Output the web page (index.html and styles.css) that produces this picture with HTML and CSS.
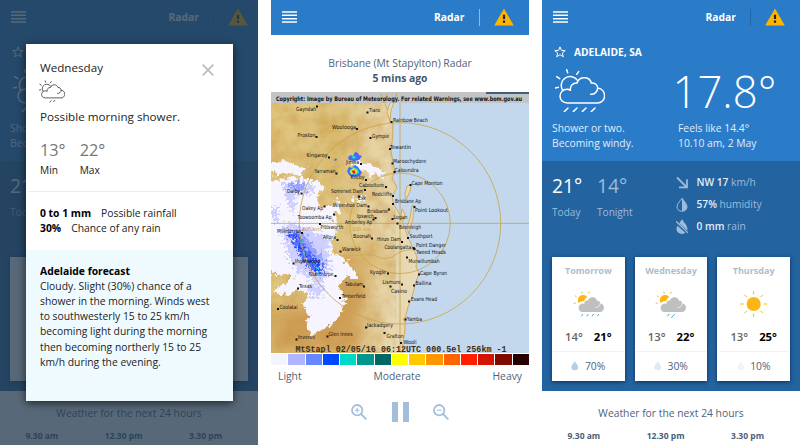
FILE: index.html
```html
<!DOCTYPE html>
<html lang="en">
<head>
<meta charset="utf-8">
<title>Weather</title>
<link rel="stylesheet" href="styles.css">
</head>
<body>
<svg class="defs" aria-hidden="true">
  <symbol id="menu" viewBox="0 0 15 12"><path d="M0 1h15M0 4.3h15M0 7.7h15M0 11h15" stroke="currentColor" stroke-width="1.5"/></symbol>
  <symbol id="alert" viewBox="0 0 20 18"><path d="M10 .4 19.8 17.6H.2z" fill="#ffb400"/><path d="M8.9 6.8h2.2v4.2H8.9zM8.9 12.6h2.2v2.2H8.9z" fill="#222"/></symbol>
  <symbol id="star" viewBox="0 0 12 12"><path d="M6 .9 7.4 4.4 11.2 4.6 8.3 7 9.3 10.8 6 8.7 2.7 10.8 3.7 7 .8 4.6 4.6 4.4z" fill="none" stroke="currentColor" stroke-width="1"/></symbol>
  <symbol id="cloud-line" viewBox="45 205 150 130">
    <g fill="none" stroke="currentColor" stroke-linecap="round">
      <path d="M152 281C162 282 173 275 173 262 186 264 194 274 194 286 194 298 184 307 172 307H82C69 307 60 298 60 287 60 275 69 266 81 266 85 266 88 267 91 269M91 267C90 255 99 246 111 247 114 237 123 231 133 231 144 231 152 238 154 247 165 246 173 253 173 262"/>
      <path d="M68 269A25 25 0 1 1 113 240M80 207l3 9M116 213l-6 8M50 228l9 6M46 262l9-2"/>
    </g>
  </symbol>
  <symbol id="cloud-fill" viewBox="100 116 94 84">
    <path d="M117 155a15 15 0 1 1 26-17c-6 3-8 6-9 11-6-1-12 1-17 6z" fill="#fdb515"/>
    <path d="M126 121l2 6M150 121l-4 6M106 133l5 4M102 157l6-2" stroke="#fdb515" stroke-width="3"/>
    <path d="M127 182a13 13 0 0 1-1-25q4-1 8 1c-1-8 5-11 10-10 3-7 9-11 15-10 7 0 12 4 13 10 7-1 10 4 9 8 8 1 12 6 12 13s-5 13-13 13z" fill="#bfbfbf"/>
    <path d="M168 168c8 1 13-4 14-13" fill="none" stroke="#fff" stroke-width="2"/>
  </symbol>
  <symbol id="drop" viewBox="0 0 12 15"><path d="M6 .3C8.5 4 11.5 7 11.5 10A5.3 4.8 0 0 1 .5 10C.5 7 3.5 4 6 .3z" fill="currentColor"/></symbol>
</svg>
<main class="screens">

  <section class="phone dimmed">
    <header class="bar">
      <svg class="menu"><use href="#menu"/></svg><span class="nav">Radar</span><i class="rule"></i><svg class="alert"><use href="#alert"/></svg>
    </header>
    <div class="now">
      <div class="place"><svg class="star"><use href="#star"/></svg></div>
      <div class="hero"><svg class="sky" viewBox="45 205 150 130"><use href="#cloud-line" x="45" y="205" width="150" height="130"/><path d="M73 333l11-11M100 333l11-11"/></svg></div>
      <div class="say"><p>Shower or two.<br>Becoming windy.</p></div>
    </div>
    <div class="outlook">
      <div class="today"><div class="hilo"><span class="big hi">21°</span><small>Today</small></div></div>
      <div class="cards"><div class="sheet"></div></div>
    </div>
    <div class="hours"><h2>Weather for the next 24 hours</h2><div class="times"><b>9.30 am</b><b>12.30 pm</b><b>3.30 pm</b></div></div>
    <div class="scrim"></div>
    <article class="dialog">
      <div class="summary">
        <svg class="close" viewBox="0 0 12 12"><path d="M.7.7l10.6 10.6M11.3.7.7 11.3" stroke="#bbb" stroke-width="1.7"/></svg>
        <h3>Wednesday</h3>
        <svg class="mini" viewBox="45 205 150 130"><use href="#cloud-line" x="45" y="205" width="150" height="130"/><path d="M107 333l9-12M128 331l10-12" fill="none" stroke="currentColor"/></svg>
        <p class="lead">Possible morning shower.</p>
        <div class="range"><div><span>13°</span><small>Min</small></div><div><span>22°</span><small>Max</small></div></div>
      </div>
      <div class="rain"><p><b>0 to 1 mm</b>Possible rainfall</p><p><b>30%</b>Chance of any rain</p></div>
      <div class="forecast"><b>Adelaide forecast</b><p>Cloudy. Slight (30%) chance of a<br>shower in the morning. Winds west<br>to southwesterly 15 to 25 km/h<br>becoming light during the morning<br>then becoming northerly 15 to 25<br>km/h during the evening.</p></div>
    </article>
  </section>

  <section class="phone radar">
    <header class="bar">
      <svg class="menu"><use href="#menu"/></svg><span class="nav">Radar</span><i class="rule light"></i><svg class="alert"><use href="#alert"/></svg>
    </header>
    <div class="title"><p>Brisbane (Mt Stapylton) Radar</p><b>5 mins ago</b></div>
    <svg class="map" viewBox="271 92 258 260.5">
      <defs>
        <linearGradient id="land" x1="0" y1="0" x2="1" y2="0"><stop offset="0" stop-color="#dfc47c"/><stop offset=".45" stop-color="#dfc785"/><stop offset=".7" stop-color="#e6d3a4"/><stop offset="1" stop-color="#e8dcbc"/></linearGradient>
        <filter id="grain" x="0" y="0" width="1" height="1" color-interpolation-filters="sRGB"><feTurbulence type="fractalNoise" baseFrequency=".06" numOctaves="4" seed="4"/><feColorMatrix values="0 0 0 0 .78  0 0 0 0 .58  0 0 0 0 .25  2 0 0 0 -.75"/></filter>
        <filter id="soft" x="-50%" y="-50%" width="200%" height="200%" color-interpolation-filters="sRGB"><feGaussianBlur stdDeviation="9"/></filter>
        <filter id="rough" x="-20%" y="-20%" width="140%" height="140%" color-interpolation-filters="sRGB"><feTurbulence type="fractalNoise" baseFrequency=".16" numOctaves="3" seed="8"/><feDisplacementMap in="SourceGraphic" scale="14" xChannelSelector="R" yChannelSelector="G"/></filter>
        <filter id="cells" x="-20%" y="-20%" width="140%" height="140%" color-interpolation-filters="sRGB"><feTurbulence type="fractalNoise" baseFrequency=".35" numOctaves="2" seed="3"/><feDisplacementMap in="SourceGraphic" scale="18" xChannelSelector="R" yChannelSelector="G"/></filter>
        <clipPath id="coast"><path d="M271 92H382L388 112 390 122 393 123 392.700 137 391 150 393 163 395 172 392 178 397 187 392 197 394 205 400 215 403 223 408 237 413 248 417 257 416 267 419 273 415 285 412 297 408 307 405 318 405 330 403 343 402 353H271z"/></clipPath>
      </defs>
      <path fill="#c3d8ec" d="M271 92h258v261H271z"/>
      <g clip-path="url(#coast)">
        <path fill="url(#land)" d="M271 92h150v261H271z"/>
        <g filter="url(#soft)"><path d="M271 310 320 300 345 250 365 290 360 353H271z" fill="#cf9f58"/><path d="M335 245 380 248 395 258 365 275 345 268z" fill="#d8b46d"/><path d="M330 110l20 10-15 70-12-20z" fill="#d6b566"/></g>
        <path filter="url(#grain)" opacity=".5" d="M271 92h125v261H271z"/>
        <path d="M336 255q15 2 25 0t18 2 16-2 18-5" fill="none" stroke="#cda75f" stroke-width=".8"/>
        <g filter="url(#rough)" fill="#f6f4ff">
          <path d="M262 182 290 178 320 181 324 186 316 194 318 204 330 208 336 198 343 206 335 216 337 232 331 244 339 258 354 268 356 276 342 280 338 286 345 300 341 316 328 328 310 336 308 318 303 306 309 294 300 290 284 296 270 290 290 282 292 274 280 276 262 270z"/>
          <path d="M268 163l17-2 22 8-6 8-14-5-19 2zM352 163l22 2 11 7-3 4-16-4-14-4zM354 200l8-5 2 4-7 6z"/>
        </g>
        <g filter="url(#cells)">
          <path d="M282 182h24l10 5-8 8-12-1-3 22-8-22zM280 226l16-2 18 6 14 14 2 26-8 14-24-12-10-16zM321 232l9 8-3 14-8-6zM306 286l12-5 8 10-12 8zM272 206h6v16h-6z" fill="#cfcfff"/>
          <path d="M286 184h15l8 4-12 4zM286 230l18 3 8 12 12 15-3 14-15-8-13-24z" fill="#9aa2ff"/>
          <path d="M288 231l12 3 3 10 12 14 9 8-4 8-13-7-10-18z" fill="#5571ff"/>
          <path d="M299 246l7 9M311 258l9 9-5 5M293 236l5 5" fill="none" stroke="#2442f2" stroke-width="2.500"/>
        </g>
        <path d="M302 239h2v3h-2zM303 252h2v2h-2zM316 267h3v2h-3zM312 261h1.500v2h-1.500zM318 271h2v2h-2z" fill="#19c9d0"/>
        <path d="M348 157l3-2 2 1 2-4 3 1 1 2 3 1-3 4-5 1-5-1zM347 171l2-4 3 1 3-3 3 2 2 3 2 2-2 4-8 1-3-2zM334 160l2-2 1 2-2 1z" fill="#4468f8"/>
        <path d="M351 156h4l1 2-3 1zM349 171l2-2 3-2 4 2 1 4-3 2-5-1z" fill="#19d9c8"/>
        <path d="M350 171l4-3 4 4-3 2h-4z" fill="#ffe800"/><path d="M351.500 171l3-1 1 3-2 1z" fill="#f31b00"/>
      </g>
      <g fill="#e8dcbc" stroke="#d29d3d" stroke-width=".8">
        <path d="M382 94 388 112 390 122 393 123 392.700 137 391 150 393 163 395 172 392 178 397 187 392 197 394 205 400 215 403 223 408 237 413 248 417 257 416 267 419 273 415 285 412 297 408 307 405 318 405 330 403 343 402 353" fill="none"/>
        <path d="M393 94 395 100 391 110 390 121 387 112 390 103zM407 186l4-1-1 6-4 9-1-6zM412 206l2-1-1 13-4 16-2-7 3-9zM402 209l3 5-1 6-3-3z"/>
        <path d="M403 319l5-2-3 5z"/>
      </g>
      <g fill="none" stroke="#c9a346" stroke-width=".8"><circle cx="400" cy="223.300" r="100.700"/><circle cx="400" cy="223.300" r="50.300"/><path d="M271 223.400h258M400 94v258"/></g>
      <g class="ring"><text x="302" y="231">200 km</text><text x="352" y="231">100 km</text></g>
      <path fill="#c2c4c6" d="M271 92h258v11H271z"/><path fill="#3f5f7c" d="M486 92h43v2h-43z"/>
      <path d="M381 94l4 9M387 94l-4 9M397 93l-3 10" stroke="#d29d3d" stroke-width=".8"/>
      <text class="copy" x="276" y="101.300" textLength="246" lengthAdjust="spacingAndGlyphs">Copyright: Image by Bureau of Meteorology. For related Warnings, see www.bom.gov.au</text>
      <g id="towns"></g>
      <text class="stamp" x="295.500" y="351.500" textLength="211" lengthAdjust="spacingAndGlyphs">MtStapl 02/05/16 06:12UTC 000.5el 256km -1</text>
    </svg>
    <div class="scale"><i class="c1"></i><i class="c2"></i><i class="c3"></i><i class="c4"></i><i class="c5"></i><i class="c6"></i><i class="c7"></i><i class="c8"></i><i class="c9"></i><i class="c10"></i><i class="c11"></i><i class="c12"></i><i class="c13"></i><i class="c14"></i><i class="c15"></i></div>
    <div class="legend"><span>Light</span><span>Moderate</span><span>Heavy</span></div>
    <div class="controls">
      <svg class="glass" viewBox="0 0 16 16"><circle cx="6.200" cy="6.200" r="5.200"/><path d="M10 10l5.300 5.300"/><path class="thin" d="M6.200 3.800v4.800M3.800 6.200h4.800"/></svg>
      <svg class="pause" viewBox="0 0 17 20"><path d="M0 0h6v20H0zM11 0h6v20h-6z"/></svg>
      <svg class="glass" viewBox="0 0 16 16"><circle cx="6.200" cy="6.200" r="5.200"/><path d="M10 10l5.300 5.300"/><path class="thin" d="M3.800 6.200h4.800"/></svg>
    </div>
  </section>

  <section class="phone">
    <header class="bar">
      <svg class="menu"><use href="#menu"/></svg><span class="nav">Radar</span><i class="rule"></i><svg class="alert"><use href="#alert"/></svg>
    </header>
    <div class="now">
      <div class="place"><svg class="star"><use href="#star"/></svg><b>ADELAIDE, SA</b></div>
      <div class="hero"><svg class="sky" viewBox="45 205 150 130"><use href="#cloud-line" x="45" y="205" width="150" height="130"/><path d="M73 333l11-11M100 333l11-11M127 333l11-11M154 333l11-11"/></svg><span class="temp">17.8°</span></div>
      <div class="say"><p>Shower or two.<br>Becoming windy.</p><p>Feels like 14.4°<br>10.10 am, 2 May</p></div>
    </div>
    <div class="outlook">
      <div class="today">
        <div class="hilo"><span class="big hi">21°</span><small>Today</small></div><div class="hilo"><span class="big">14°</span><small>Tonight</small></div>
        <ul class="facts">
          <li><svg viewBox="0 0 12 15"><path d="M1 2.500l9 9M3 12.300h8V4.300" fill="none" stroke="currentColor" stroke-width="1.800"/></svg><span><b>NW 17</b> km/h</span></li>
          <li><svg viewBox="0 0 12 15"><path d="M6 1.200C8.300 4.500 11 7 11 10a5 4.300 0 0 1-10 0C1 7 3.700 4.500 6 1.200z" fill="none" stroke="currentColor"/><path d="M6 1C8.300 4.500 11 7 11 10a5 4.300 0 0 1-5 4z" fill="currentColor"/></svg><span><b>57%</b> humidity</span></li>
          <li><svg viewBox="0 0 12 15"><use href="#drop"/><path d="M-1 2.500 13 15" stroke="#23639f" stroke-width="3"/><path d="M0 2.300 12 13.900" stroke="currentColor" stroke-width="1.200"/></svg><span><b>0 mm</b> rain</span></li>
        </ul>
      </div>
      <div class="cards">
        <div class="card"><h4>Tomorrow</h4><svg class="pic" viewBox="100 116 94 84"><use href="#cloud-fill" x="100" y="116" width="94" height="84"/><path class="wet" d="M125 195l5-7M141 195l5-7M157 195l5-7M173 195l5-7"/></svg><p class="mm"><span>14°</span><b>21°</b></p><p class="chance"><svg class="d70"><use href="#drop"/></svg>70%</p></div>
        <div class="card"><h4>Wednesday</h4><svg class="pic" viewBox="100 116 94 84"><use href="#cloud-fill" x="100" y="116" width="94" height="84"/><path class="wet" d="M137 195l6-8M149 200l10-12"/></svg><p class="mm"><span>13°</span><b>22°</b></p><p class="chance"><svg class="d30"><use href="#drop"/></svg>30%</p></div>
        <div class="card"><h4>Thursday</h4><svg class="pic" viewBox="-14 -14 28 28"><circle r="7.100" fill="#fdb515"/><path d="M0-13v3.500M0 13V9.500M-13.500 0H-10M13.500 0H10M-9.300-9.300l2.500 2.500M9.300 9.300 6.800 6.800M-9.300 9.300l2.500-2.500M9.300-9.300 6.800-6.800" stroke="#fdb515"/></svg><p class="mm"><span>13°</span><b>25°</b></p><p class="chance"><svg class="d10"><use href="#drop"/></svg>10%</p></div>
      </div>
    </div>
    <div class="hours"><h2>Weather for the next 24 hours</h2><div class="times"><b>9.30 am</b><b>12.30 pm</b><b>3.30 pm</b></div></div>
  </section>
</main>
<script src="towns.js"></script>
</body>
</html>
```
FILE: towns.js
```js
// name, label x, label baseline, label width, marker x, marker y
const towns = [
  ["Gayndah", 296, 110.5, 20, 317, 106.5], ["Tiaro", 369, 112, 11, 367.5, 112.5],
  ["Rainbow Beach", 393, 121.5, 35, 391.5, 122], ["Woolooga", 332, 128.5, 24, 357, 129],
  ["Proston", 297.5, 137, 18, 316.5, 137], ["Gympie", 372, 137.5, 17, 370.5, 138],
  ["Tewantin", 390, 148.5, 21, 390, 149], ["Kingaroy", 306.5, 157, 21, 329, 157.5],
  ["Jimna", 346, 163.5, 13, 361, 164], ["Maroochydore", 393, 163, 33, 392.5, 163.5],
  ["Caloundra", 394.5, 171.5, 24, 394.5, 172], ["Yarraman", 314.5, 173, 21, 336.5, 173.5],
  ["Kilcoy", 350.5, 178.5, 14, 366, 180], ["Cape Moreton", 411.5, 184.5, 31, 410.5, 185],
  ["Caboolture", 359, 187, 25, 386, 187], ["Dalby", 287, 193, 13, 301.5, 193.5],
  ["Somerset Dam", 331, 193, 32, 365, 190], ["Redcliffe", 372, 195.5, 20, 393, 196],
  ["Esk", 358, 200, 8, 359, 196.5], ["Brisbane Ap", 395, 203, 26, 393, 204],
  ["Wivenhoe Dam", 333, 206.5, 34, 368.5, 206.5], ["Point Lookout", 415, 212, 33, 414.5, 207],
  ["Oakey Ap", 302, 209.5, 21, 324.500, 206.5], ["Brisbane", 367, 212.5, 21, 389, 209.5],
  ["Ipswich", 357, 217.5, 17, 375.5, 218], ["Logan", 393.5, 218.5, 14, 392.5, 219],
  ["Toowoomba Ap", 297.5, 219, 34, 334, 214.5], ["Amberley Ap", 345, 223.5, 27, 373.500, 219.5],
  ["Beenleigh", 399, 228.5, 22, 397.5, 223.5], ["Pittsworth", 320.500, 229, 23, 320, 224],
  ["Millmerran", 277, 232.5, 24, 302, 233], ["Southport", 409.5, 237.5, 23, 408, 238],
  ["Boonah", 353, 238, 18, 372, 238.5], ["Allora", 323, 239, 13, 337.500, 240],
  ["Hinze Dam", 377, 241, 24, 402, 242], ["Point Danger", 416, 246.5, 30, 414.5, 249],
  ["Coolangatta", 384.500, 248.500, 27, 413.5, 248], ["Warwick", 342, 251, 19, 340.5, 251.5],
  ["Tweed Heads", 416, 253.5, 30, 414, 248.5], ["Murwillumbah", 408.500, 262.500, 31, 407, 257.500],
  ["Inglewood", 295, 263, 25, 293.500, 263.500], ["Kyogle", 370, 273.500, 16, 388, 273.500],
  ["Cape Byron", 420, 274.5, 27, 419, 274.500], ["Stanthorpe", 309.500, 275.500, 24, 335.500, 276],
  ["Ballina", 415.5, 285, 16, 414, 285.5], ["Lismore", 382.500, 284, 18, 402, 284.500],
  ["Tabulam", 345, 285.500, 18, 364, 286.500], ["Texas", 299, 287.500, 13, 298, 288.500],
  ["Casino", 391, 293, 16, 390.500, 286.500], ["Tenterfield", 341.500, 298, 24, 340, 298],
  ["Evans Head", 411, 301, 26, 409, 301.500], ["Coolatai", 279.500, 308.500, 18, 278, 309],
  ["Yamba", 407, 320.500, 15, 405.500, 319.500], ["Jackadgery", 367, 327, 26, 366, 327.500],
  ["Glen Innes", 328.500, 336, 24, 327.500, 336.500], ["Inverell", 298, 339, 17, 296.500, 339.500],
  ["Grafton", 386.500, 338, 17, 384.500, 333], ["Wooli", 403.500, 343.500, 13, 401, 343]
];
const ns = "http://www.w3.org/2000/svg";
const layer = document.getElementById("towns");
for (const [name, x, y, width, mx, my] of towns) {
  const label = document.createElementNS(ns, "text");
  label.setAttribute("x", x);
  label.setAttribute("y", y);
  label.setAttribute("textLength", width);
  label.setAttribute("lengthAdjust", "spacingAndGlyphs");
  label.textContent = name;
  const mark = document.createElementNS(ns, "rect");
  mark.setAttribute("x", mx - 1);
  mark.setAttribute("y", my - 1);
  mark.setAttribute("width", 2);
  mark.setAttribute("height", 2);
  layer.append(label, mark);
}
```
FILE: styles.css
```css
* { box-sizing: border-box; }
body, p, h2, h3, h4, ul { margin: 0; padding: 0; }
body { background: #fff; font: 10.330px/15px "Open Sans", "Noto Sans", sans-serif; }
ul { list-style: none; }
svg { display: block; flex: none; }
.defs { position: absolute; width: 0; height: 0; }
.screens { display: flex; gap: 13px; width: 800px; height: 445px; overflow: hidden; }
.phone { position: relative; flex: none; width: 258px; height: 445px; overflow: hidden; background: #fff; color: #fff; }

.bar { display: flex; align-items: center; height: 34.500px; padding: 0 15px 0 11px; background: #2a7bc8; color: #fff; }
.menu { width: 15px; height: 12px; margin-right: auto; }
.nav { font-weight: 700; }
.rule { width: 1px; height: 17px; margin: 0 14px; background: #2465a4; }
.rule.light { width: 1.500px; background: #9fb8d0; }
.alert { width: 20px; height: 18px; }
.dimmed .bar { padding-right: 10px; }

.now { height: 126px; padding: 10px 10px 0; background: #2a7bc8; }
.place { display: flex; align-items: center; gap: 8px; height: 15px; padding-left: 2px; font-size: 10.200px; }
.star { width: 12px; height: 12px; }
.hero { display: flex; height: 61px; padding: 9px 0 0 3px; }
.sky { width: 50px; height: 43.300px; margin-right: 67.500px; fill: none; stroke: currentColor; stroke-width: 4.500; stroke-linecap: round; }
.temp { font-size: 43.700px; line-height: 44px; font-weight: 300; }
.say { display: grid; grid-template-columns: 126px 1fr; color: #e1edf8; }

.outlook { height: 230px; padding: 0 10px; background: #23639f; color: #9ebbdb; }
.today { display: flex; height: 96.500px; padding-top: 14px; }
.hilo { width: 45px; }
.hilo small, .big { display: block; }
.big { font-size: 19.300px; line-height: 21px; margin-bottom: 9px; }
.hi { color: #fff; }
.hilo small { font-size: 10.100px; line-height: 15px; }
.facts { display: grid; grid-auto-rows: 22px; margin: -3px 0 0 34px; font-size: 10.200px; align-items: center; }
.facts li { display: flex; gap: 8.500px; align-items: center; }
.facts svg { width: 12px; height: 15px; overflow: hidden; }
.facts b { color: #e1edf8; font-weight: 600; }
.cards { display: grid; grid-template-columns: repeat(3, 1fr); gap: 10px; }
.card, .sheet { height: 123.500px; background: #fff; box-shadow: 0 1px 4px rgba(0, 20, 50, .65); }
.sheet { grid-column: 1 / -1; }
.card { display: flex; flex-direction: column; align-items: center; padding-top: 7px; color: #4f6476; }
.card h4 { height: 26px; font-size: 9px; line-height: 14px; color: #adbdcd; }
.pic { width: 31.300px; height: 28px; overflow: visible; }
.wet { stroke: #4ba3c7; stroke-width: 2.800; fill: none; }
.mm { display: flex; gap: 11px; height: 33px; padding-top: 10px; font-size: 11.300px; line-height: 18px; font-weight: 600; color: #666; }
.mm b { color: #000; font-weight: 700; }
.chance { display: flex; justify-content: center; align-items: center; gap: 6px; width: 70px; height: 29px; border-top: 1px solid #eef2f5; }
.chance svg { width: 7.500px; height: 9.500px; }
.d70 { color: #b6cde6; } .d30 { color: #dfe9f4; } .d10 { color: #f0f5fa; }
.hours { padding-top: 14px; color: #4f6476; text-align: center; }
.hours h2 { font-size: 10.330px; line-height: 16px; font-weight: 400; }
.times { display: flex; justify-content: space-between; padding: 7px 36px 0 25.500px; font-size: 8.500px; line-height: 15px; color: #48607a; }

.scrim { position: absolute; inset: 0; background: rgba(37, 58, 80, .77); }
.dialog { position: absolute; left: 26px; top: 44px; width: 207px; height: 357px; background: #fff; color: #222; box-shadow: 0 2px 8px rgba(0, 0, 0, .65); }
.summary { position: relative; height: 148px; margin: 0 2px; padding: 15px 12px 0; border-bottom: 1.500px solid #e7f0f0; }
.close { position: absolute; right: 17px; top: 20px; width: 12px; height: 12px; }
.summary h3 { font-size: 11.630px; line-height: 17px; font-weight: 400; }
.mini { width: 26px; height: 23px; margin: 4px 0 0 -1px; color: #333; stroke-width: 4.500; }
.lead { margin-top: 5px; font-size: 11.670px; line-height: 17px; }
.range { display: flex; margin-top: 14px; }
.range div { width: 39.700px; }
.range span, .range small { display: block; }
.range span { font-size: 16.300px; line-height: 23px; color: #777; }
.range small { font-size: 10.200px; line-height: 16px; }
.rain { height: 57.500px; padding: 14px 14px 0; line-height: 15.300px; }
.rain b { margin-right: 10px; }
.rain b, .forecast b { color: #000; }
.forecast { height: 151.500px; padding: 14px 14px 0; background: #effaff; line-height: 15.200px; }

.radar { color: #4f6476; }
.title { height: 57.500px; padding-top: 21px; text-align: center; }
.title b { display: block; color: #3f566b; }
.map { width: 258px; height: 260.500px; }
#towns { font: 5.600px "DejaVu Sans", sans-serif; fill: #111; }
.ring { font: 5px "DejaVu Sans", sans-serif; fill: #c99c45; }
.copy { font: bold 6.200px "DejaVu Sans", sans-serif; fill: #111; }
.stamp { font: bold 9px "Liberation Mono", monospace; fill: #3b2d15; }
.scale { display: grid; grid-template-columns: repeat(15, 1fr); gap: 1px; height: 12.500px; padding-top: 1px; }
.c1 { background: #f4f4ff; } .c2 { background: #b0b5ff; } .c3 { background: #6687ff; } .c4 { background: #0049ff; }
.c5 { background: #00d8c8; } .c6 { background: #009690; } .c7 { background: #006666; } .c8 { background: #ffff00; }
.c9 { background: #ffc800; } .c10 { background: #ff9600; } .c11 { background: #ff6400; } .c12 { background: #ff1e00; }
.c13 { background: #d31400; } .c14 { background: #800a00; } .c15 { background: #280000; }
.legend { display: flex; justify-content: space-between; padding: 4px 7px 0; }
.controls { display: flex; justify-content: center; align-items: center; gap: 24.500px; margin-top: 18px; }
.glass { width: 16px; height: 16px; fill: none; stroke: #a3bedb; stroke-width: 1.800; }
.glass .thin { stroke-width: 1.100; }
.pause { width: 17px; height: 20px; fill: #a3bedb; }
```
